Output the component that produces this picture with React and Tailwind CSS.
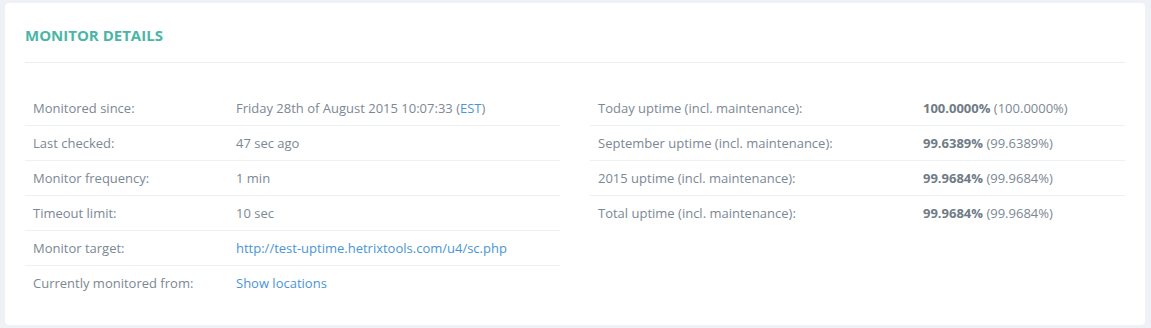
export default function App() {
  const left = [
    ["Monitored since:", <>Friday 28th of August 2015 10:07:33 (<span className="text-[#4a95d6]">EST</span>)</>],
    ["Last checked:", "47 sec ago"],
    ["Monitor frequency:", "1 min"],
    ["Timeout limit:", "10 sec"],
    ["Monitor target:", <span className="text-[#4a95d6]">http://test-uptime.hetrixtools.com/u4/sc.php</span>],
    ["Currently monitored from:", <span className="text-[#4a95d6]">Show locations</span>],
  ];
  const right = [
    ["Today uptime (incl. maintenance):", "100.0000%", "(100.0000%)"],
    ["September uptime (incl. maintenance):", "99.6389%", "(99.6389%)"],
    ["2015 uptime (incl. maintenance):", "99.9684%", "(99.9684%)"],
    ["Total uptime (incl. maintenance):", "99.9684%", "(99.9684%)"],
  ];
  return (
    <div className="w-[1151px] h-[328px] bg-[#eef1f6] pt-[3px] pl-[5px]" style={{ fontFamily: '"Open Sans", sans-serif' }}>
      <div className="w-[1140px] h-[322px] bg-white rounded-[4px] px-[20px] pt-[22px]">
        <div className="text-[15px] leading-[20px] font-bold text-[#4bb6a6]">MONITOR DETAILS</div>
        <div className="mt-[17px] border-t border-[#ebedf0]"></div>
        <div className="flex gap-[30px] mt-[28px] text-[13px] leading-[18px] text-[#7c8894]">
          <div className="w-[535px]">
            {left.map(([k, v], i) => (
              <div key={i} className={"flex py-[8px] " + (i > 0 ? "border-t border-[#eef0f2]" : "")}>
                <div className="w-[211px] pl-[8px] shrink-0">{k}</div>
                <div>{v}</div>
              </div>
            ))}
          </div>
          <div className="w-[535px]">
            {right.map(([k, b, v], i) => (
              <div key={i} className={"flex py-[8px] " + (i > 0 ? "border-t border-[#eef0f2]" : "")}>
                <div className="w-[333px] pl-[8px] shrink-0">{k}</div>
                <div><span className="font-bold text-[#6f7b86]">{b}</span> {v}</div>
              </div>
            ))}
          </div>
        </div>
      </div>
    </div>
  );
}
